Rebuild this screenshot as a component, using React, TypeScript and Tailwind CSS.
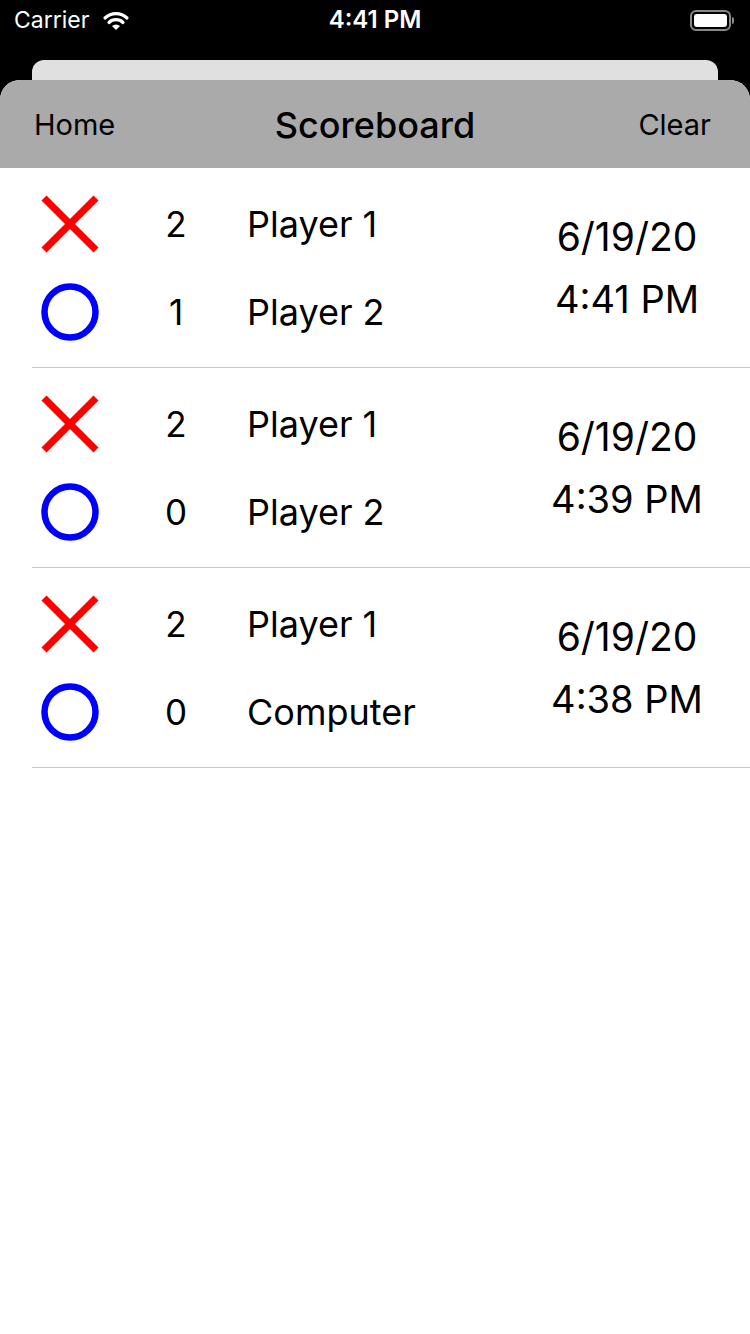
import React from "react";

const XIcon = () => (
  <svg width="58" height="58" viewBox="0 0 58 58">
    <line x1="3" y1="3" x2="55" y2="55" stroke="#ff0000" strokeWidth="7" />
    <line x1="55" y1="3" x2="3" y2="55" stroke="#ff0000" strokeWidth="7" />
  </svg>
);

const OIcon = () => (
  <svg width="58" height="58" viewBox="0 0 58 58">
    <circle cx="29" cy="29" r="25.5" fill="none" stroke="#0000ff" strokeWidth="6.5" />
  </svg>
);

type Game = { s1: number; n1: string; s2: number; n2: string; date: string; time: string };

const games: Game[] = [
  { s1: 2, n1: "Player 1", s2: 1, n2: "Player 2", date: "6/19/20", time: "4:41 PM" },
  { s1: 2, n1: "Player 1", s2: 0, n2: "Player 2", date: "6/19/20", time: "4:39 PM" },
  { s1: 2, n1: "Player 1", s2: 0, n2: "Computer", date: "6/19/20", time: "4:38 PM" },
];

const Line = ({ icon, score, name }: { icon: React.ReactNode; score: number; name: string }) => (
  <div className="flex h-[88px] items-center">
    <div className="ml-[41px] flex w-[58px] items-center justify-center">{icon}</div>
    <div className="ml-[47px] w-[60px] text-center text-[35px] leading-none">{score}</div>
    <div className="ml-[41px] text-[36px] leading-none">{name}</div>
  </div>
);

export default function App() {
  const font = { fontFamily: "Inter, 'Liberation Sans', sans-serif" };
  return (
    <div className="relative h-[1334px] w-[750px] overflow-hidden bg-black text-black" style={font}>
      {/* status bar */}
      <div className="flex h-[40px] items-center justify-between px-[14px] text-white">
        <div className="flex w-[200px] items-center gap-[13px] text-[23px]">
          <span>Carrier</span>
          <svg width="28" height="22" viewBox="0 0 28 22">
            <path d="M14 21 L10 17 A6 6 0 0 1 18 17 Z" fill="white" />
            <path d="M7 13.5 A10 10 0 0 1 21 13.5" stroke="white" strokeWidth="3.2" fill="none" strokeLinecap="round" />
            <path d="M3 9 A16 16 0 0 1 25 9" stroke="white" strokeWidth="3.2" fill="none" strokeLinecap="round" />
          </svg>
        </div>
        <div className="text-[24px] font-semibold">4:41 PM</div>
        <div className="flex w-[200px] justify-end pr-[2px]">
          <div className="flex items-center">
            <div className="flex h-[21px] w-[41px] items-center rounded-[6px] border-[2px] border-[#888] p-[2px]">
              <div className="h-full w-full rounded-[3px] bg-white" />
            </div>
            <div className="ml-[1px] h-[7px] w-[2px] rounded-r bg-[#888]" />
          </div>
        </div>
      </div>
      {/* back sheet */}
      <div className="mx-[32px] mt-[20px] h-[40px] rounded-t-[12px] bg-[#e0e0e0]" />
      {/* front sheet */}
      <div className="-mt-[20px] h-[1300px] overflow-hidden rounded-t-[20px] bg-white">
        <div className="relative flex h-[88px] items-center justify-between bg-[#aaaaaa] pl-[34px] pr-[39px] pt-[1px]">
          <span className="text-[29px]">Home</span>
          <span className="absolute left-1/2 -translate-x-1/2 text-[36px] font-medium">Scoreboard</span>
          <span className="text-[29px]">Clear</span>
        </div>
        {games.map((g, i) => (
          <div key={i} className="flex h-[200px] flex-col">
            <div className="flex flex-1 items-start pt-[12px]">
              <div className="flex-1">
                <Line icon={<XIcon />} score={g.s1} name={g.n1} />
                <Line icon={<OIcon />} score={g.s2} name={g.n2} />
              </div>
              <div className="mr-[33px] flex w-[180px] flex-col items-center pt-[37px] text-[39px] leading-none">
                <div>{g.date}</div>
                <div className="mt-[24px] text-[38px]">{g.time}</div>
              </div>
            </div>
            <div className="ml-[32px] h-px bg-[#c8c8c8]" />
          </div>
        ))}
      </div>
    </div>
  );
}
